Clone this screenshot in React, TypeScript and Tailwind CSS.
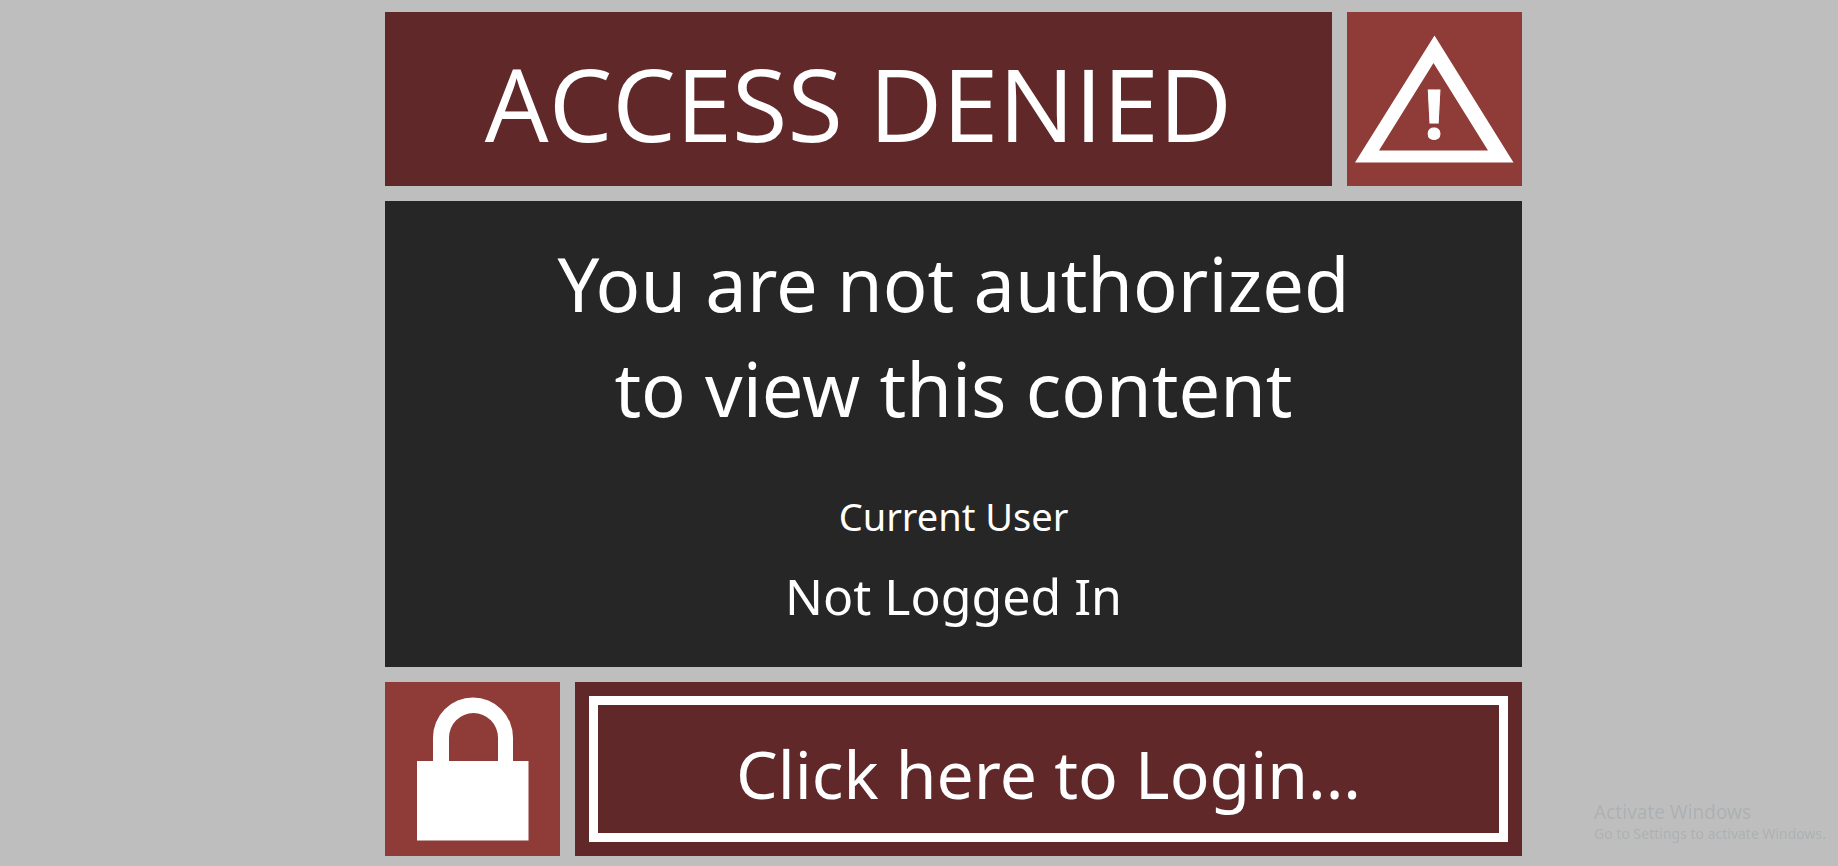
import type { ReactNode } from "react";

type IconTileProps = {
  label: string;
  children: ReactNode;
};

function IconTile({ label, children }: IconTileProps) {
  return (
    <div className="h-[174px] w-[175px] shrink-0 bg-[#8f3b38]">
      <svg viewBox="0 0 175 174" role="img" aria-label={label} className="block h-full w-full fill-white">
        {children}
      </svg>
    </div>
  );
}

export default function App() {
  return (
    <div className="min-h-screen bg-[#bebebe] py-3 pl-[69px] font-['Segoe_UI','Noto_Sans',sans-serif] text-white">
      <main className="mx-auto flex max-w-[1137px] flex-col gap-[15px]">
        <header className="flex gap-[15px]">
          <div className="flex flex-1 items-center justify-center bg-[#602828] pt-2">
            <h1 className="font-['Segoe_UI','Open_Sans',sans-serif] text-[101px] leading-[140px]">ACCESS DENIED</h1>
          </div>
          <IconTile label="Warning">
            <path fillRule="evenodd" d="M87.5 23.5 166.5 150.5H8ZM86.5 51 32 138.5H141Z" />
            <text x="87" y="127" textAnchor="middle" className="stroke-white stroke-1 text-[68px] font-bold">!</text>
          </IconTile>
        </header>

        <section className="flex flex-col items-center bg-[#262626] pt-[30px] pb-9 text-center">
          <p className="text-[74px] leading-[105px]">
            You are not authorized
            <br />
            to view this content
          </p>
          <p className="mt-12 text-[38px] leading-[54px]">Current User</p>
          <p className="mt-[18px] text-[50px] leading-[70px]">Not Logged In</p>
        </section>

        <div className="flex gap-[15px]">
          <IconTile label="Locked">
            <path
              fillRule="evenodd"
              d="M32 79H48V55.5A40 40 0 0 1 128 55.5V79H143.5V158.5H32ZM64 79H113V55.5A24.5 24.5 0 0 0 64 55.5Z"
            />
          </IconTile>
          <button type="button" className="flex-1 cursor-pointer bg-[#602828] p-[14px]">
            <span className="flex h-full items-center justify-center border-[9px] border-white pt-2 text-[66px] leading-[94px]">
              Click here to Login...
            </span>
          </button>
        </div>
      </main>

      <aside className="fixed right-3 bottom-[22px] text-[#adb1b3]">
        <p className="text-[19px] leading-6">Activate Windows</p>
        <p className="text-[14px] leading-5">Go to Settings to activate Windows.</p>
      </aside>
    </div>
  );
}
